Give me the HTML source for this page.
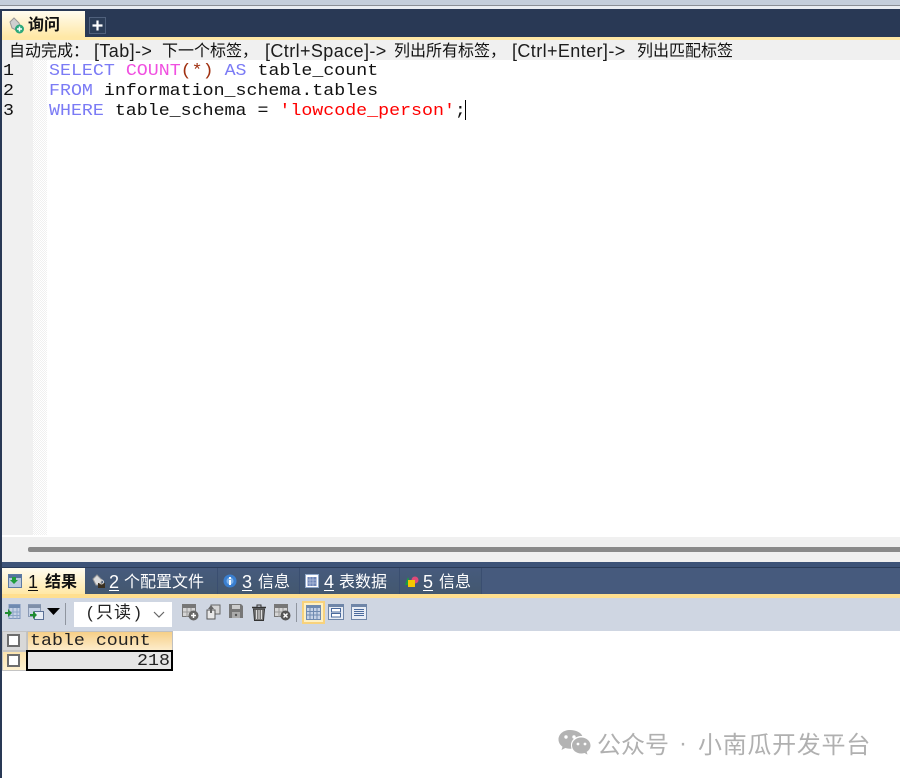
<!DOCTYPE html>
<html><head><meta charset="utf-8">
<style>
html,body{margin:0;padding:0;background:#fff}
#p{position:relative;width:900px;height:778px;overflow:hidden;background:#fff;font-family:"Liberation Sans","WenQuanYi Zen Hei","Noto Sans CJK SC",sans-serif}
#p div,#p svg{position:absolute}
.t{white-space:pre;line-height:20px}
.h{top:41px;font-size:16px;color:#111;white-space:pre;line-height:20px}
.l{top:41px;font-size:18px;letter-spacing:.4px;color:#1c1c1c;white-space:pre;line-height:20px}
.m{font-family:"Liberation Mono",monospace;font-size:18.3px;line-height:20px;white-space:pre;left:49px;color:#111;transform:scaleY(.9);transform-origin:0 15px}
.k{color:#7b7bf5}.f{color:#f050e0}.s{color:#f00}.o{color:#a03010}
.tab{top:568px;height:26px;background:linear-gradient(#465a7d,#43586f);border-right:1px solid #3a4e70}
.d{top:572px;font-size:18px;line-height:20px;color:#fff;text-decoration:underline;text-underline-offset:2px;white-space:pre}
.c{top:573px;font-size:16px;line-height:20px;color:#fff;white-space:pre}
</style></head><body><div id="p">
<div style="left:0;top:0;width:900px;height:5px;background:#c4cedb"></div>
<div style="left:0;top:5px;width:900px;height:1px;background:#8a8f96"></div>
<div style="left:0;top:6px;width:900px;height:3px;background:#e9edf2"></div>
<div style="left:0;top:9px;width:900px;height:28px;background:#293955"></div>
<div style="left:0;top:9px;width:2px;height:769px;background:#293955"></div>
<div style="left:2px;top:11px;width:83px;height:26px;background:linear-gradient(#fffcf0,#ffe8a6)"></div>
<svg style="left:9px;top:17px" width="16" height="17" viewBox="0 0 16 17"><path d="M1 5 L5 1 L10 6 L11 9 L7 13 L3 11Z" fill="#cfcfcf" stroke="#999" stroke-width="1"/><circle cx="10.500" cy="12" r="4.500" fill="#2aa87a"/><path d="M8 12h5M10.500 9.500v5" stroke="#fff" stroke-width="1.500"/></svg>
<div class="t" style="left:28px;top:16px;font-size:16px;font-weight:bold;color:#111">询问</div>
<div style="left:89px;top:17px;width:15px;height:15px;background:#2c3d57;border:1px solid #4f607c"></div>
<svg style="left:90px;top:18px" width="15" height="15"><path d="M7.500 2.500v10M2.500 7.500h10" stroke="#fff" stroke-width="2.200"/></svg>
<div style="left:2px;top:37px;width:898px;height:3px;background:#ffe8a6"></div>
<div style="left:2px;top:40px;width:898px;height:20px;background:#f0f0f0"></div>
<div class="h" style="left:9px;top:42px">自动完成：</div>
<div class="l" style="left:94px">[Tab]-&gt;</div>
<div class="h" style="left:162px;top:42px">下一个标签，</div>
<div class="l" style="left:265px">[Ctrl+Space]-&gt;</div>
<div class="h" style="left:394px;top:42px">列出所有标签，</div>
<div class="l" style="left:512px">[Ctrl+Enter]-&gt;</div>
<div class="h" style="left:637px;top:42px">列出匹配标签</div>
<div style="left:2px;top:60px;width:31px;height:475px;background:#f0f0f0"></div>
<div style="left:33px;top:60px;width:14px;height:475px;background:repeating-conic-gradient(#f0f0f0 0 25%,#fff 0 50%) 0 0/2px 2px"></div>
<div class="m" style="left:3px;top:61px">1</div><div class="m" style="left:3px;top:81px">2</div><div class="m" style="left:3px;top:101px">3</div>
<div class="m" style="top:61px"><span class="k">SELECT</span> <span class="f">COUNT</span><span class="o">(*)</span> <span class="k">AS</span> table_count</div>
<div class="m" style="top:81px"><span class="k">FROM</span> information_schema.tables</div>
<div class="m" style="top:101px"><span class="k">WHERE</span> table_schema = <span class="s">'lowcode_person'</span>;</div>
<div style="left:465px;top:100px;width:1px;height:20px;background:#000"></div>
<div style="left:2px;top:537px;width:898px;height:25px;background:#f0f0f0"></div>
<div style="left:28px;top:547px;width:872px;height:5px;background:#8a8a8a;border-radius:2px 0 0 2px"></div>
<div style="left:2px;top:562px;width:898px;height:5px;background:#3d5378"></div>
<div style="left:2px;top:567px;width:898px;height:1px;background:#2a3b58"></div>
<div style="left:2px;top:568px;width:898px;height:26px;background:#465a7d"></div>
<div style="left:2px;top:594px;width:898px;height:4px;background:#ffdf8f"></div>
<div style="left:2px;top:598px;width:898px;height:33px;background:#cfd6e2"></div>
<div style="left:2px;top:568px;width:83px;height:26px;background:linear-gradient(#fffcf0,#ffe8a6)"></div>
<div class="d" style="left:28px;color:#111">1</div>
<div class="c" style="left:45px;color:#111;font-weight:bold">结果</div>
<svg style="left:8px;top:574px" width="14" height="14"><rect x="0.500" y="0.500" width="13" height="13" fill="#b9c8de" stroke="#5c7aa3"/><rect x="1" y="1" width="12" height="3" fill="#55739c"/><path d="M4 3h4v3h2L6 10 2 6h2z" fill="#1f9d3a"/></svg>
<div class="tab" style="left:85px;width:132px"></div>
<svg style="left:92px;top:574px" width="15" height="15"><path d="M1 5L5 1l5 5-2 5-4 0z" fill="#ddd" stroke="#999"/><rect x="6" y="9" width="7" height="5" fill="#3a3020"/><circle cx="9.500" cy="8" r="2" fill="none" stroke="#ddd"/></svg>
<div class="d" style="left:109px">2</div><div class="c" style="left:124px">个配置文件</div>
<div class="tab" style="left:218px;width:81px"></div>
<svg style="left:223px;top:574px" width="14" height="14"><circle cx="7" cy="7" r="6.500" fill="#3a7fd0"/><circle cx="7" cy="7" r="3.500" fill="#7fb3ea"/><rect x="6" y="3" width="2" height="2" fill="#fff"/><rect x="6" y="6" width="2" height="5" fill="#fff"/></svg>
<div class="d" style="left:242px">3</div><div class="c" style="left:258px">信息</div>
<div class="tab" style="left:300px;width:99px"></div>
<svg style="left:305px;top:574px" width="14" height="14"><rect x="0.500" y="0.500" width="13" height="13" fill="#fff" stroke="#8ea6c8"/><rect x="2.500" y="3" width="9" height="9" fill="#6f86b8"/><path d="M5 3v9M8 3v9M2 6h10M2 9h10" stroke="#b6c4de" stroke-width="0.700"/></svg>
<div class="d" style="left:324px">4</div><div class="c" style="left:339px">表数据</div>
<div class="tab" style="left:400px;width:81px"></div>
<svg style="left:404px;top:575px" width="15" height="13"><path d="M1 10L4 2l3 8z" fill="#1aa040"/><circle cx="11" cy="5" r="3.500" fill="#e04a78"/><rect x="4" y="5" width="7" height="7" fill="#f5c800"/></svg>
<div class="d" style="left:423px">5</div><div class="c" style="left:439px">信息</div>

<svg style="left:5px;top:604px" width="16" height="16"><rect x="4" y="0.500" width="11" height="14" fill="#c6d2e6" stroke="#7f97bd"/><path d="M4 1h11v3H4z" fill="#6f8ab0"/><path d="M8 4v11M12 4v11M4 8h11M4 11.500h11" stroke="#8ea6c8"/><path d="M0 8h3V5l4 4-4 4v-3H0z" fill="#1e8c30"/></svg>
<svg style="left:28px;top:604px" width="16" height="17"><rect x="0.500" y="0.500" width="12" height="12" fill="#c6d2e6" stroke="#8a9ab5"/><path d="M0 1h13v3H0z" fill="#7f8fa8"/><rect x="6.500" y="7.500" width="9" height="8" fill="#e8edf5" stroke="#5a7096"/><path d="M2 10h3V7l4 4-4 4v-3H2z" fill="#1e8c30"/></svg>
<svg style="left:47px;top:608px" width="13" height="8"><path d="M0 0h13L6.500 7z" fill="#000"/></svg>
<div style="left:65px;top:603px;width:1px;height:22px;background:#8f959f"></div>
<div style="left:74px;top:602px;width:98px;height:25px;background:#fff"></div>
<div class="t" style="left:87px;top:603px;font-size:17px;line-height:20px;color:#222">(</div>
<div class="t" style="left:96px;top:603px;font-size:17px;line-height:20px;color:#222;letter-spacing:1px">只读</div>
<div class="t" style="left:135px;top:603px;font-size:17px;line-height:20px;color:#222">)</div>
<svg style="left:153px;top:611px" width="12" height="8"><path d="M1 1l5 5 5-5" fill="none" stroke="#666" stroke-width="1.200"/></svg>
<svg style="left:182px;top:604px" width="17" height="17"><rect x="0.500" y="0.500" width="13" height="12" fill="#d5d5d5" stroke="#777"/><path d="M0 1h14v3H0z" fill="#777"/><path d="M5 4v9M9 4v9M1 8h12" stroke="#999"/><circle cx="11.500" cy="11.500" r="5" fill="#666"/><path d="M9 11.500h5M11.500 9v5" stroke="#fff" stroke-width="1.500"/></svg>
<svg style="left:205px;top:604px" width="16" height="16"><rect x="6" y="1" width="9" height="9" fill="#d5d5d5" stroke="#666"/><rect x="2" y="6" width="8" height="9" fill="#e8e8e8" stroke="#555"/><path d="M3 5l3-4 3 4H7v4H5V5z" fill="#666"/></svg>
<svg style="left:229px;top:604px" width="14" height="14"><path d="M0 0h12l2 2v12H0z" fill="#777"/><rect x="3" y="1" width="8" height="4" fill="#ccc"/><rect x="3" y="8" width="8" height="6" fill="#aaa"/><circle cx="7" cy="11" r="1.200" fill="#555"/></svg>
<svg style="left:251px;top:604px" width="16" height="17"><path d="M1 3.500h14" stroke="#333" stroke-width="1.500"/><path d="M6 3V1h4v2" fill="none" stroke="#333"/><path d="M2.500 5h11l-1 11.500h-9z" fill="#777" stroke="#333"/><path d="M5.500 6v9M8 6v9M10.500 6v9" stroke="#ddd"/></svg>
<svg style="left:274px;top:604px" width="17" height="17"><rect x="0.500" y="0.500" width="13" height="12" fill="#d5d5d5" stroke="#777"/><path d="M0 1h14v3H0z" fill="#777"/><path d="M5 4v9M9 4v9M1 8h12" stroke="#999"/><circle cx="11.500" cy="11.500" r="5" fill="#555"/><path d="M9.500 9.500l4 4M13.500 9.500l-4 4" stroke="#fff" stroke-width="1.500"/></svg>
<div style="left:296px;top:603px;width:1px;height:19px;background:#8f959f"></div>
<div style="left:302px;top:601px;width:19px;height:19px;background:#fdf0c4;border:2px solid #f8d27c"></div>
<svg style="left:306px;top:605px" width="15" height="15"><rect x="0.500" y="0.500" width="14" height="14" fill="#c6d2e6" stroke="#6f8ab0"/><path d="M0 1h15v2H0z" fill="#6f8ab0"/><path d="M4 3v12M7.500 3v12M11 3v12M0 6.500h15M0 10h15" stroke="#6f8ab0"/></svg>
<svg style="left:328px;top:604px" width="16" height="16"><rect x="0.500" y="0.500" width="15" height="15" fill="#e8edf5" stroke="#6f86a8"/><path d="M0 1h16v2H0z" fill="#6f86a8"/><rect x="3.500" y="4.500" width="9" height="3.500" fill="#fff" stroke="#4a6a9c"/><rect x="3.500" y="9.500" width="9" height="3.500" fill="#fff" stroke="#4a6a9c"/></svg>
<svg style="left:351px;top:604px" width="16" height="16"><rect x="0.500" y="0.500" width="15" height="15" fill="#e8edf5" stroke="#6f86a8"/><path d="M0 1h16v2H0z" fill="#6f86a8"/><path d="M3 5.500h10M3 7.500h10M3 9.500h10M3 11.500h10" stroke="#4a6a9c"/></svg>

<div style="left:2px;top:631px;width:25px;height:20px;background:#d8d8d8;border:1px solid #c4c4c4;box-sizing:border-box"></div>
<div style="left:7px;top:634px;width:9px;height:9px;background:#fff;border:2.500px solid #6e6e6e"></div>
<div style="left:27px;top:631px;width:146px;height:20px;background:linear-gradient(#f6cf87,#fdeccb);border:1px solid #c0c0c0;box-sizing:border-box"></div>
<div class="m" style="left:30px;top:631px;color:#222">table count</div>
<div style="left:2px;top:651px;width:25px;height:20px;background:linear-gradient(#fbe3ad,#fdf0cf);border:1px solid #c4c4c4;box-sizing:border-box"></div>
<div style="left:7px;top:654px;width:9px;height:9px;background:#fff;border:2.500px solid #6e6e6e"></div>
<div style="left:26px;top:650px;width:147px;height:21px;background:#e6e6e6;border:2px solid #000;box-sizing:border-box"></div>
<div class="m" style="left:137px;top:651px;color:#222">218</div>

<svg style="left:558px;top:729px" width="33" height="27" viewBox="0 0 33 27"><path d="M12 1C5.500 1 .5 5 .5 10.500c0 3 1.700 5.500 4 7.200L3.500 21l3.800-2c1.400.4 3 .7 4.700.7.500 0 1 0 1.500-.1C13 18 13 17 13 16c0-5 4.700-9 10.500-9h.8C23 3.500 18 1 12 1z" fill="#b3b3b3"/><path d="M32.500 16.500C32.500 12 28.300 8.500 23.200 8.500S14 12 14 16.500s4.200 8 9.200 8c1.200 0 2.300-.2 3.300-.5l3 1.600-.8-2.700c2.300-1.500 3.800-3.800 3.800-6.400z" fill="#b3b3b3"/><circle cx="8" cy="8" r="1.700" fill="#fff"/><circle cx="16" cy="8" r="1.700" fill="#fff"/><circle cx="20" cy="15" r="1.400" fill="#fff"/><circle cx="27" cy="15" r="1.400" fill="#fff"/></svg>
<div class="t" style="left:597px;top:728px;font-size:24px;line-height:30px;color:#b0b0b0;font-family:'Noto Sans CJK SC',sans-serif">公众号</div>
<div class="t" style="left:679px;top:729px;font-size:24px;line-height:30px;color:#b0b0b0;font-family:'Liberation Sans',sans-serif">·</div>
<div class="t" style="left:698px;top:728px;font-size:24px;letter-spacing:.7px;line-height:30px;color:#b0b0b0;font-family:'Noto Sans CJK SC',sans-serif">小南瓜开发平台</div>
</div></body></html>
